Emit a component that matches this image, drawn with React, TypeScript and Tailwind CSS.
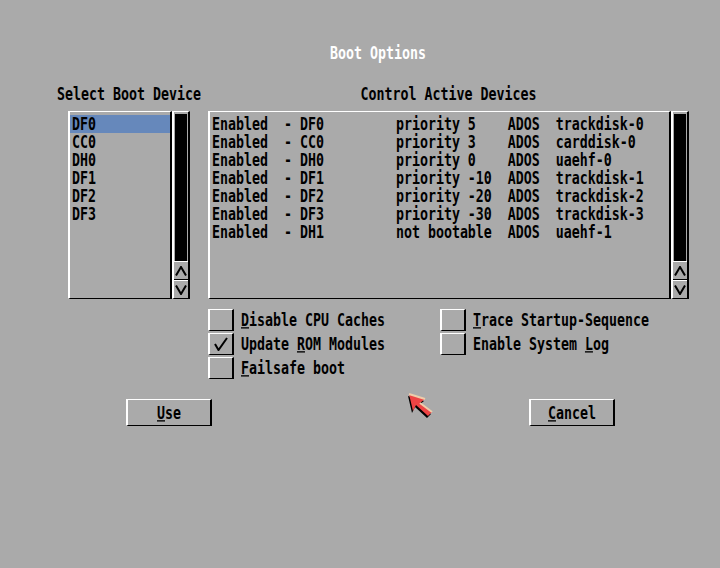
import React from "react";

const T = ({ children, className = "" }: { children: React.ReactNode; className?: string }) => (
  <span
    className={`inline-block h-[13.33px] origin-top scale-y-[1.35] align-top leading-[14.6px] whitespace-pre ${className}`}
  >
    {children}
  </span>
);

const U = ({ children }: { children: React.ReactNode }) => (
  <span className="underline decoration-[1px] underline-offset-[1px]">{children}</span>
);

const devices: [string, string, string][] = [
  ["DF0", "priority 5", "trackdisk-0"],
  ["CC0", "priority 3", "carddisk-0"],
  ["DH0", "priority 0", "uaehf-0"],
  ["DF1", "priority -10", "trackdisk-1"],
  ["DF2", "priority -20", "trackdisk-2"],
  ["DF3", "priority -30", "trackdisk-3"],
  ["DH1", "not bootable", "uaehf-1"],
];

const Arrow = ({ up }: { up?: boolean }) => (
  <svg width="12" height="10" viewBox="0 0 12 10" className="block">
    {up ? (
      <polyline points="1,9.5 6,1 11,9.5" fill="none" stroke="#000" strokeWidth="2" />
    ) : (
      <polyline points="1,0.5 6,9 11,0.5" fill="none" stroke="#000" strokeWidth="2" />
    )}
  </svg>
);

const Scroller = () => (
  <div className="flex h-full w-[18px] flex-col border-t border-l-2 border-b border-r-2 border-t-white border-l-white border-b-black border-r-black">
    <div className="mx-[1px] mt-[2px] h-[147px] bg-black" />
    <div className="flex h-[19px] items-center justify-center border-t border-b border-t-white border-b-black">
      <Arrow up />
    </div>
    <div className="flex h-[18px] items-center justify-center border-t border-t-white">
      <Arrow />
    </div>
  </div>
);

const Check = ({ checked, children }: { checked?: boolean; children: React.ReactNode }) => (
  <div className="flex h-[22px] items-center">
    <div className="flex h-[22px] w-[26px] items-center justify-center border-t border-l-2 border-b border-r-2 border-t-white border-l-white border-b-black border-r-black">
      {checked && (
        <svg width="14" height="14" viewBox="0 0 14 14" className="block">
          <polyline points="1,7 4.5,13 13,1" fill="none" stroke="#000" strokeWidth="2" />
        </svg>
      )}
    </div>
    <div className="ml-[7px] h-[18px] leading-[18px]">
      <T>{children}</T>
    </div>
  </div>
);

const Button = ({ children }: { children: React.ReactNode }) => (
  <div className="flex h-[27px] w-[86px] items-center justify-center border-t border-l-2 border-b border-r-2 border-t-white border-l-white border-b-black border-r-black">
    <div className="h-[18px] leading-[18px]">
      <T>{children}</T>
    </div>
  </div>
);

export default function App() {
  return (
    <div className="relative flex h-[568px] w-[720px] flex-col overflow-hidden bg-[#aaaaaa] pt-[44px] font-['DejaVu_Sans_Mono',monospace] text-[13.29px] font-bold leading-[18px] text-black">
      <div className="h-[18px] pl-[330px] text-white">
        <T>Boot Options</T>
      </div>

      <div className="mt-[23px] flex items-start gap-[18px] pl-[68px]">
        {/* left column */}
        <div className="flex w-[122px] flex-col">
          <div className="flex h-[18px] justify-center whitespace-nowrap">
            <T>Select Boot Device</T>
          </div>
          <div className="mt-[8px] flex h-[188px]">
            <div className="flex-1 border-t border-l-2 border-b border-r-2 border-t-white border-l-white border-b-black border-r-black pt-[3px]">
              {["DF0", "CC0", "DH0", "DF1", "DF2", "DF3"].map((d, i) => (
                <div key={d} className={`h-[18px] pl-[2px] ${i === 0 ? "bg-[#6688bb]" : ""}`}>
                  <T>{d}</T>
                </div>
              ))}
            </div>
            <Scroller />
          </div>
        </div>

        {/* right column */}
        <div className="flex w-[481px] flex-col">
          <div className="flex h-[18px] justify-center whitespace-nowrap">
            <T>Control Active Devices</T>
          </div>
          <div className="mt-[8px] flex h-[188px]">
            <div className="flex-1 border-t border-l-2 border-b border-r-2 border-t-white border-l-white border-b-black border-r-black pt-[3px]">
              {devices.map(([d, p, h]) => (
                <div key={d} className="h-[18px] pl-[2px]">
                  <T>{"Enabled  - " + d.padEnd(12) + p.padEnd(14) + "ADOS  " + h}</T>
                </div>
              ))}
            </div>
            <Scroller />
          </div>

          <div className="mt-[10px] flex">
            <div className="flex w-[232px] flex-col gap-[2px]">
              <Check>
                <U>D</U>isable CPU Caches
              </Check>
              <Check checked>
                Update <U>R</U>OM Modules
              </Check>
              <Check>
                <U>F</U>ailsafe boot
              </Check>
            </div>
            <div className="flex flex-col gap-[2px]">
              <Check>
                <U>T</U>race Startup-Sequence
              </Check>
              <Check>
                Enable System <U>L</U>og
              </Check>
            </div>
          </div>
        </div>
      </div>

      <div className="mt-[20px] flex gap-[317px] pl-[126px]">
        <Button>
          <U>U</U>se
        </Button>
        <Button>
          <U>C</U>ancel
        </Button>
      </div>

      {/* mouse pointer */}
      <svg
        className="absolute left-[407px] top-[392px]"
        width="30"
        height="28"
        viewBox="0 0 30 28"
      >
        <polygon points="1,4 17,9 12,13 24,22 20,26 8,15 5,21" fill="#000" />
        <polygon points="2,2 18,7 13,11 25,20 21,24 9,13 6,19" fill="#ee4444" />
        <polyline points="2,2 18,7" fill="none" stroke="#eeccaa" strokeWidth="2" />
        <polyline points="13,11 25,20" fill="none" stroke="#eeccaa" strokeWidth="2" />
      </svg>
    </div>
  );
}
